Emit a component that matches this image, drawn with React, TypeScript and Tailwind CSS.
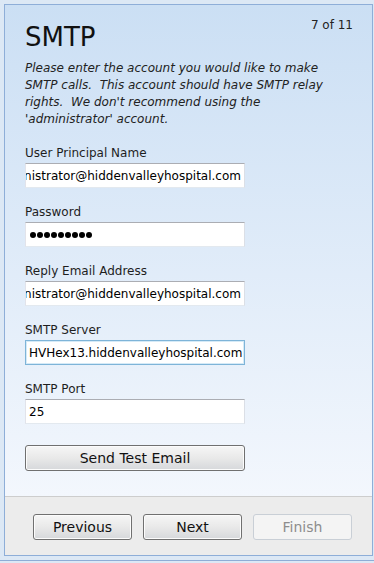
import React from 'react';

const font = { fontFamily: 'Tahoma, "DejaVu Sans", Verdana, sans-serif' };

const Field: React.FC<{ label: string; value: string; focused?: boolean; password?: boolean; scrolled?: boolean }> = ({ label, value, focused, password, scrolled }) => (
    <div className="flex flex-col">
        <label className="text-[12px] leading-[16px] text-[#1e1e1e] mb-[2px]">{label}</label>
        <div
            className={`w-[220px] h-[25px] bg-white flex items-center overflow-hidden px-[3px] border ${focused
                ? 'border-[#7eb4d8] shadow-[inset_0_0_0_1px_#d5eaf7]'
                : 'border-t-[#abadb3] border-l-[#e2e3ea] border-r-[#dbdfe6] border-b-[#e3e9ef]'
                }`}
        >
            {password ? (
                <div className="flex gap-[1px] pl-[1px]">
                    {Array.from({ length: 9 }).map((_, i) => (
                        <div key={i} className="w-[6px] h-[6px] rounded-full bg-black" />
                    ))}
                </div>
            ) : (
                <div className={`w-full flex whitespace-nowrap ${scrolled ? 'justify-end' : 'justify-start'}`}>
                    <span className="text-[12px] text-black">{value}</span>
                </div>
            )}
        </div>
    </div>
);

const WinButton: React.FC<{ label: string; disabled?: boolean; className?: string }> = ({ label, disabled, className }) => (
    <button
        className={`h-[26px] rounded-[3px] border text-[14px] ${disabled
            ? 'border-[#c9cfd6] bg-[#f4f4f4] text-[#8d8d8d]'
            : 'border-[#707070] bg-gradient-to-b from-[#f6f6f6] via-[#e9e9e9] to-[#d6d8db] text-[#111] shadow-[inset_0_0_0_1px_#fcfcfc]'
            } ${className ?? ''}`}
    >
        {label}
    </button>
);

export default function App() {
    return (
        <div className="w-[374px] h-[563px] bg-[#dce8f5] relative overflow-hidden" style={font}>
            <div className="absolute left-0 right-0 top-[560px] h-[1px] bg-[#8eadd6]" />
            <div className="ml-[4px] mt-[4px] w-[369px] h-[552px] border border-[#8eaed8] flex flex-col">
                <div className="flex-1 bg-gradient-to-b from-[#cbdff4] to-[#f3f7fd] px-[20px] pt-[16px] flex flex-col">
                    <div className="flex justify-between items-start">
                        <h1 className="text-[26px] leading-[32px] text-[#111] font-normal">SMTP</h1>
                        <span className="text-[12px] text-[#222] mt-[-5px] mr-[-1px]">7 of 11</span>
                    </div>
                    <p className="italic text-[12px] leading-[17px] text-[#222] mt-[7px] w-[320px]">
                        Please enter the account you would like to make SMTP calls.&nbsp; This account should have SMTP relay rights.&nbsp; We don't recommend using the 'administrator' account.
                    </p>
                    <div className="flex flex-col gap-[16px] mt-[17px]">
                        <Field label="User Principal Name" value="administrator@hiddenvalleyhospital.com" scrolled />
                        <Field label="Password" value="" password />
                        <Field label="Reply Email Address" value="administrator@hiddenvalleyhospital.com" scrolled />
                        <Field label="SMTP Server" value="HVHex13.hiddenvalleyhospital.com" focused />
                        <Field label="SMTP Port" value="25" />
                    </div>
                    <WinButton label="Send Test Email" className="w-[220px] mt-[21px]" />
                </div>
                <div className="h-[59px] bg-[#ececec] border-t border-[#cdcdcd] flex items-start gap-[11px] pl-[28px] pt-[17px]">
                    <WinButton label="Previous" className="w-[99px]" />
                    <WinButton label="Next" className="w-[99px]" />
                    <WinButton label="Finish" disabled className="w-[99px]" />
                </div>
            </div>
        </div>
    );
}
